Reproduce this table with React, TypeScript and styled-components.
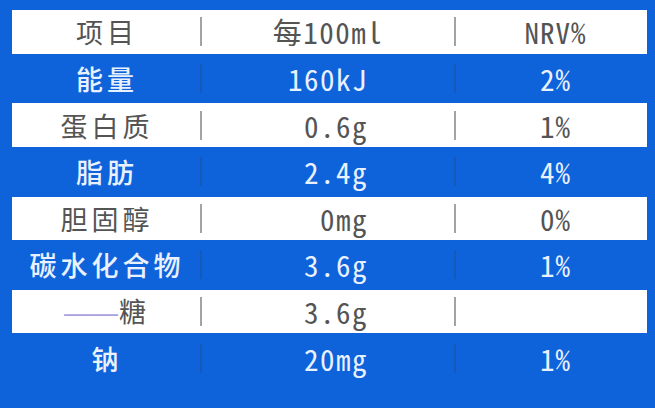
import React from "react";
import styled, { createGlobalStyle } from "styled-components";

const BLUE = "#0e63da";

const GlobalStyle = createGlobalStyle`
    html, body {
        margin: 0;
        padding: 0;
        background: ${BLUE};
    }
`

const Table = styled.div`
    width: 655px;
    height: 408px;
    box-sizing: border-box;
    padding: 10px 8px 0 12px;
    background: ${BLUE};
    font-family: "Noto Sans CJK SC", "Noto Sans", sans-serif;
`

const Row = styled.div<{ $light: boolean }>`
    display: grid;
    grid-template-columns: 188px 2px 252px 2px 191px;
    align-items: center;
    height: ${({ $light }) => ($light ? "43.5px" : "49.8px")};
    background: ${({ $light }) => ($light ? "#ffffff" : "transparent")};
    color: ${({ $light }) => ($light ? "#545454" : "#e9f1ff")};
    font-weight: ${({ $light }) => ($light ? 400 : 500)};
`

const Label = styled.div`
    text-align: center;
    font-size: 27px;
    letter-spacing: 4px;
    padding-left: 2px;
    line-height: 1;
`

const Dash = styled.span`
    font-family: "Liberation Sans", sans-serif;
    font-weight: 400;
    color: #a79fdf;
    letter-spacing: 0;
    margin-right: 1px;
`

const Value = styled.div<{ $head?: boolean }>`
    font-family: "Noto Sans Mono CJK SC", "DejaVu Sans Mono", monospace;
    font-size: 29px;
    letter-spacing: 1.5px;
    line-height: 1;
    text-align: ${({ $head }) => ($head ? "center" : "right")};
    padding-right: ${({ $head }) => ($head ? "0" : "86px")};
`

const Percent = styled.div`
    font-family: "Noto Sans Mono CJK SC", "DejaVu Sans Mono", monospace;
    font-size: 29px;
    letter-spacing: 1px;
    line-height: 1;
    text-align: center;
    padding-left: 8px;
`

const Divider = styled.div<{ $light: boolean }>`
    height: 29px;
    width: 2px;
    background: ${({ $light }) => ($light ? "#a3a3a3" : "rgba(40, 70, 130, 0.35)")};
`

interface Item {
    name: React.ReactNode
    amount: string
    nrv: string
}

const items: Item[] = [
    { name: "能量", amount: "160kJ", nrv: "2%" },
    { name: "蛋白质", amount: "0.6g", nrv: "1%" },
    { name: "脂肪", amount: "2.4g", nrv: "4%" },
    { name: "胆固醇", amount: "0mg", nrv: "0%" },
    { name: "碳水化合物", amount: "3.6g", nrv: "1%" },
    { name: <><Dash>——</Dash>糖</>, amount: "3.6g", nrv: "" },
    { name: "钠", amount: "20mg", nrv: "1%" },
]

export default function App() {
    return (
        <>
            <GlobalStyle />
            <Table>
                <Row $light>
                    <Label>项目</Label>
                    <Divider $light />
                    <Value $head>每100ml</Value>
                    <Divider $light />
                    <Percent>NRV%</Percent>
                </Row>
                {items.map((item, i) => {
                    const light = i % 2 === 1
                    return (
                        <Row key={i} $light={light}>
                            <Label>{item.name}</Label>
                            <Divider $light={light} />
                            <Value>{item.amount}</Value>
                            <Divider $light={light} />
                            <Percent>{item.nrv}</Percent>
                        </Row>
                    )
                })}
            </Table>
        </>
    )
}
